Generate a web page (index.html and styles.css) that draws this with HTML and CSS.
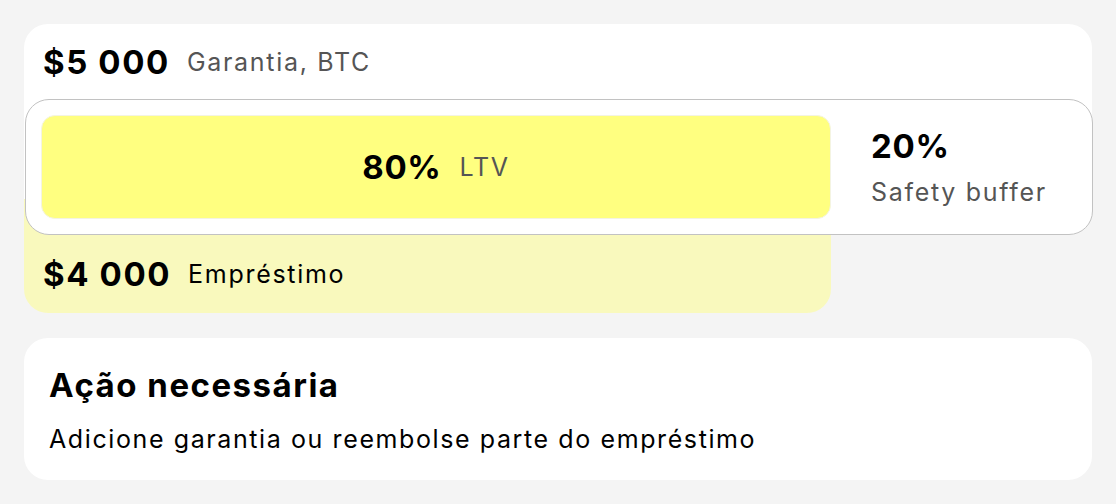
FILE: index.html
```html
<!DOCTYPE html>
<html lang="pt">
<head>
<meta charset="utf-8">
<title>LTV</title>
<link rel="stylesheet" href="styles.css">
</head>
<body>
<main class="page">
  <section class="position">
    <div class="collateral">
      <div class="amount-row">
        <span class="amount">$5&nbsp;000</span>
        <span class="label muted">Garantia, BTC</span>
      </div>
      <div class="meter">
        <div class="ltv-bar">
          <span class="pct">80%</span>
          <span class="label muted">LTV</span>
        </div>
        <div class="buffer">
          <span class="pct">20%</span>
          <span class="label muted">Safety buffer</span>
        </div>
      </div>
    </div>
    <div class="loan">
      <span class="amount">$4&nbsp;000</span>
      <span class="label">Empréstimo</span>
    </div>
  </section>
  <section class="action">
    <h2 class="action-title">Ação necessária</h2>
    <p class="action-text">Adicione garantia ou reembolse parte do empréstimo</p>
  </section>
</main>
</body>
</html>
```
FILE: styles.css
```css
* { box-sizing: border-box; }
html, body { margin: 0; padding: 0; }
body {
  background: #f4f4f4;
  font-family: Inter, "Noto Sans", sans-serif;
  color: #000;
}
.page {
  padding: 24px;
  display: flex;
  flex-direction: column;
  gap: 25px;
}
.position {
  display: flex;
  flex-direction: column;
}
.collateral {
  background: #fff;
  border-radius: 24px;
}
.amount-row {
  height: 75px;
  display: flex;
  align-items: center;
  gap: 17px;
  padding: 0 19px;
}
.amount {
  font-size: 33px;
  font-weight: 700;
  line-height: 38px;
  letter-spacing: 1.6px;
}
.label {
  font-size: 25px;
  line-height: 30px;
  letter-spacing: 1.7px;
}
.muted { color: #555; }
.meter {
  position: relative;
  z-index: 2;
  margin: 0 -1px 0 1px;
  height: 136px;
  background: #fff;
  border: 1.5px solid #c2c2c2;
  border-radius: 24px;
  padding: 15px 16px 15px 15px;
  display: flex;
  align-items: stretch;
  gap: 40px;
}
.ltv-bar {
  width: 790px;
  flex: none;
  background: #ffff80;
  border: 1px solid #f4f4e2;
  border-radius: 14px;
  display: flex;
  align-items: center;
  justify-content: center;
  gap: 18px;
}
.pct {
  font-size: 33px;
  font-weight: 700;
  line-height: 38px;
  letter-spacing: 0.7px;
}
.buffer {
  display: flex;
  flex-direction: column;
  justify-content: center;
  gap: 12px;
}
.loan {
  position: relative;
  z-index: 1;
  width: 807px;
  margin-top: -36px;
  padding: 36px 19px 0;
  height: 114px;
  background: #f9f9bd;
  border-radius: 0 0 24px 24px;
  display: flex;
  align-items: center;
  gap: 17px;
}
.action {
  background: #fff;
  border-radius: 24px;
  height: 142px;
  padding: 28px 25px 0;
}
.action-title {
  margin: 0;
  font-size: 33px;
  font-weight: 700;
  line-height: 38px;
  letter-spacing: 1.5px;
}
.action-text {
  margin: 20px 0 0;
  font-size: 25px;
  line-height: 30px;
  letter-spacing: 1.6px;
}
```
